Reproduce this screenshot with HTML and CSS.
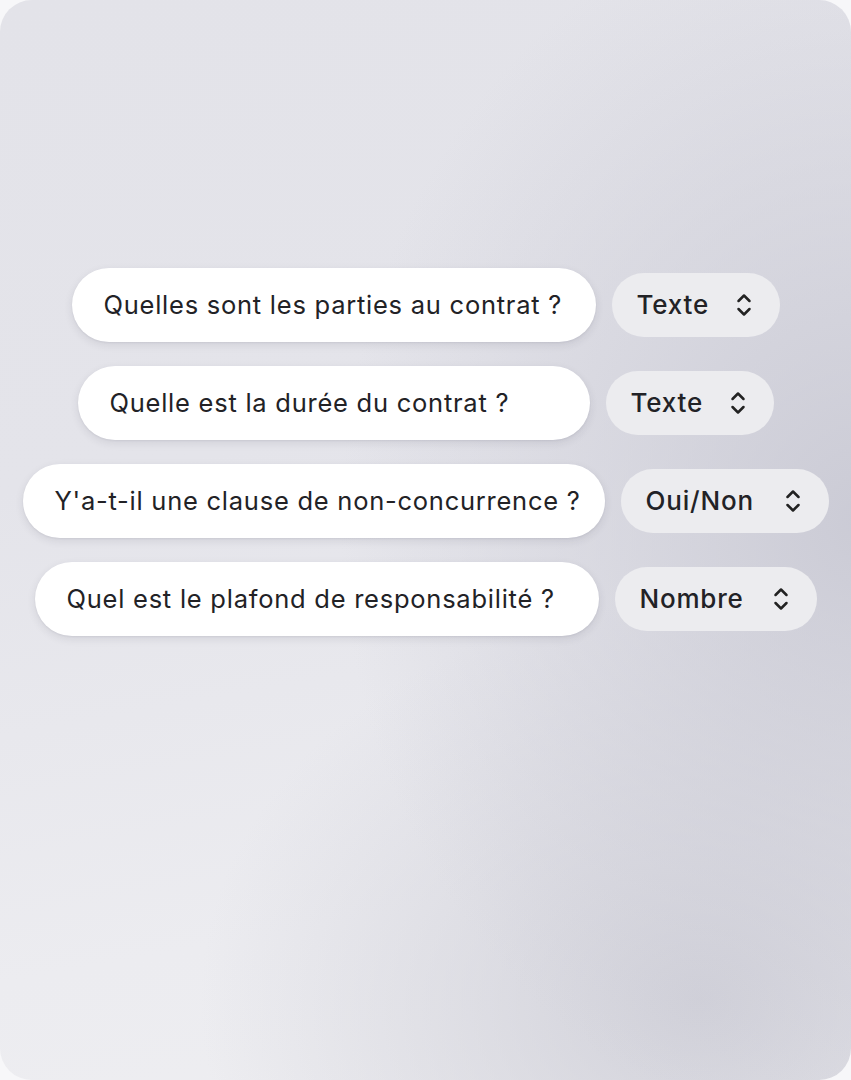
FILE: index.html
```html
<!DOCTYPE html>
<html lang="fr">
<head>
<meta charset="utf-8">
<title>Champs</title>
<link rel="stylesheet" href="styles.css">
</head>
<body>
<div class="card">
  <div class="rows">
    <div class="row">
      <div class="question" style="width:524px">Quelles sont les parties au contrat ?</div>
      <div class="select" style="width:168px"><span>Texte</span><svg class="chev" viewBox="0 0 16 26" width="16" height="26"><path d="M2.5 9 L8 3.5 L13.5 9 M2.5 17 L8 22.5 L13.5 17" fill="none" stroke="#222" stroke-width="2.5" stroke-linecap="round" stroke-linejoin="round"/></svg></div>
    </div>
    <div class="row">
      <div class="question" style="width:512px">Quelle est la durée du contrat ?</div>
      <div class="select" style="width:168px"><span>Texte</span><svg class="chev" viewBox="0 0 16 26" width="16" height="26"><path d="M2.5 9 L8 3.5 L13.5 9 M2.5 17 L8 22.5 L13.5 17" fill="none" stroke="#222" stroke-width="2.5" stroke-linecap="round" stroke-linejoin="round"/></svg></div>
    </div>
    <div class="row">
      <div class="question" style="width:582px">Y'a-t-il une clause de non-concurrence ?</div>
      <div class="select" style="width:208px"><span>Oui/Non</span><svg class="chev" viewBox="0 0 16 26" width="16" height="26"><path d="M2.5 9 L8 3.5 L13.5 9 M2.5 17 L8 22.5 L13.5 17" fill="none" stroke="#222" stroke-width="2.5" stroke-linecap="round" stroke-linejoin="round"/></svg></div>
    </div>
    <div class="row">
      <div class="question" style="width:564px">Quel est le plafond de responsabilité ?</div>
      <div class="select" style="width:202px"><span>Nombre</span><svg class="chev" viewBox="0 0 16 26" width="16" height="26"><path d="M2.5 9 L8 3.5 L13.5 9 M2.5 17 L8 22.5 L13.5 17" fill="none" stroke="#222" stroke-width="2.5" stroke-linecap="round" stroke-linejoin="round"/></svg></div>
    </div>
  </div>
</div>
</body>
</html>
```
FILE: styles.css
```css
html, body {
  margin: 0;
  padding: 0;
  background: #f7f7f9;
}
body {
  font-family: Inter, "Liberation Sans", sans-serif;
  color: #222226;
}
.card {
  width: 851px;
  height: 1080px;
  box-sizing: border-box;
  border-radius: 32px;
  overflow: hidden;
  background:
    radial-gradient(ellipse 520px 620px at 860px 520px, rgba(200,200,211,0.9), rgba(200,200,211,0) 100%),
    radial-gradient(ellipse 500px 400px at 700px 1000px, rgba(206,206,215,0.9), rgba(206,206,215,0) 100%),
    linear-gradient(170deg, #e3e3e9 0%, #e4e4ea 40%, #ececf0 80%, #eeeef1 100%);
  padding-top: 268px;
}
.rows {
  display: flex;
  flex-direction: column;
  gap: 24px;
  align-items: center;
}
.row {
  display: flex;
  align-items: center;
  gap: 16px;
}
.question {
  height: 74px;
  box-sizing: border-box;
  background: #ffffff;
  border-radius: 37px;
  padding-left: 32px;
  padding-bottom: 2px;
  display: flex;
  align-items: center;
  font-size: 25.5px;
  letter-spacing: 0.75px;
  white-space: nowrap;
  box-shadow: 0 3px 8px rgba(40,40,60,0.10), 0 1px 2px rgba(40,40,60,0.06);
}
.select {
  height: 64px;
  box-sizing: border-box;
  background: #ececef;
  border-radius: 32px;
  padding: 0 28px 2px 25px;
  display: flex;
  align-items: center;
  justify-content: space-between;
  font-size: 26px;
  font-weight: 500;
  letter-spacing: 0.8px;
  white-space: nowrap;
}
.chev {
  display: block;
  margin-top: 2px;
}
```
